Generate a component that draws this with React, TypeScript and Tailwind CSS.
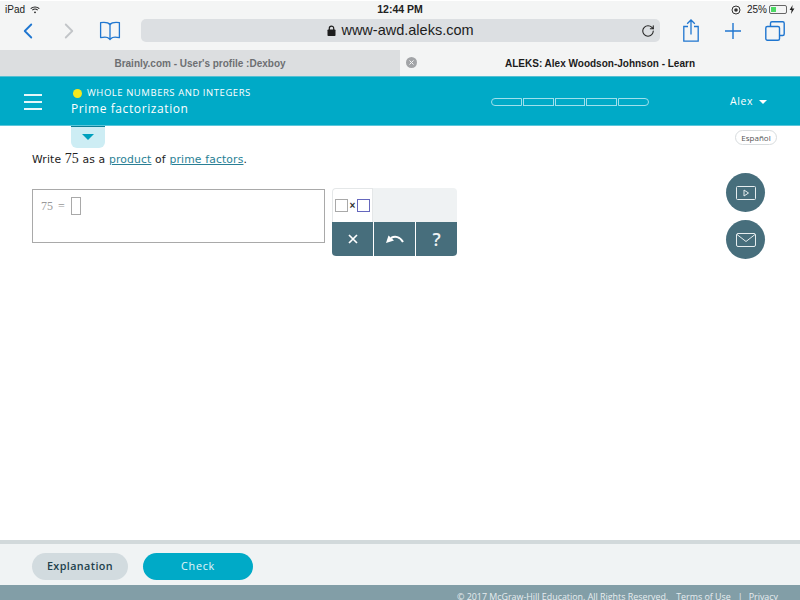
import { ChevronLeft, ChevronRight, RotateCw } from "lucide-react";

function BookIcon() {
  return (
    <svg width="22" height="20" viewBox="0 0 22 20" fill="none" stroke="#1f76d0" strokeWidth="1.3" strokeLinejoin="round">
      <path d="M11 3.5C9.5 1.6 6 1 1.6 1.6V16.6C5.5 15.8 8.8 16 10 17.5L11 18.5L12 17.5C13.2 16 16.5 15.8 20.4 16.6V1.6C16 1 12.5 1.6 11 3.5Z" />
      <path d="M11 3.5V18" />
    </svg>
  );
}

function ShareIcon() {
  return (
    <svg width="16" height="23" viewBox="0 0 16 23" fill="none" stroke="#1f76d0" strokeWidth="1.3">
      <path d="M5 7.5H0.8V22.2H15.2V7.5H11" />
      <path d="M8 15.5V1.2M4.2 4.8L8 1L11.8 4.8" />
    </svg>
  );
}

function TabsIcon() {
  return (
    <svg width="20" height="20" viewBox="0 0 20 20" fill="none" stroke="#1f76d0" strokeWidth="1.4">
      <rect x="0.8" y="5.5" width="13.7" height="13.7" rx="1.5" />
      <path d="M5.5 5.5V2.3C5.5 1.5 6.2 0.8 7 0.8H17.7C18.5 0.8 19.2 1.5 19.2 2.3V13C19.2 13.8 18.5 14.5 17.7 14.5H14.5" />
    </svg>
  );
}

function StatusBar() {
  return (
    <div className="h-[17px] shrink-0 pt-[1px] bg-[#f4f5f5] border-t border-white flex items-center justify-between pl-[5px] pr-[5px] text-[10px] text-[#222]">
      <div className="flex items-center gap-[5px] w-[200px]">
        <span>iPad</span>
        <svg width="10" height="8" viewBox="0 0 10 8" fill="none" stroke="#222" strokeWidth="1.1">
          <path d="M0.7 2.6C3 0.4 7 0.4 9.3 2.6M2.3 4.2C3.8 2.9 6.2 2.9 7.7 4.2" />
          <circle cx="5" cy="6.3" r="0.9" fill="#222" stroke="none" />
        </svg>
      </div>
      <span className="font-bold text-[10.5px] text-[#222]">12:44 PM</span>
      <div className="w-[200px] flex items-center justify-end">
        <svg width="10" height="10" viewBox="0 0 10 10" fill="none" stroke="#333" strokeWidth="1" className="mr-[6px]">
          <circle cx="5" cy="5" r="4" />
          <circle cx="5" cy="5" r="1.8" fill="#333" stroke="none" />
        </svg>
        <span className="mr-[2px]">25%</span>
        <div className="w-[18px] h-[9px] border border-[#666] rounded-[2px] p-[1px]">
          <div className="w-[5px] h-full bg-[#4cd964]" />
        </div>
        <svg width="6" height="9" viewBox="0 0 6 9" className="ml-[2px]">
          <path d="M3.6 0L0.6 5H2.6L2 9L5.4 3.6H3.2Z" fill="#222" />
        </svg>
      </div>
    </div>
  );
}

function Toolbar() {
  return (
    <div className="h-[33px] shrink-0 bg-[#f4f5f5] flex items-center pb-[6px]">
      <ChevronLeft className="ml-[15px] text-[#1f76d0]" size={26} strokeWidth={1.7} />
      <ChevronRight className="ml-[15px] text-[#c2c5c8]" size={26} strokeWidth={1.7} />
      <div className="ml-[17px]"><BookIcon /></div>
      <div className="ml-[20px] w-[519px] h-[23px] rounded-[5px] bg-[#dcdfe2] flex items-center justify-center relative">
        <svg width="9" height="11" viewBox="0 0 9 11" className="mr-[5px]">
          <rect x="0.5" y="4.5" width="8" height="6.5" rx="0.8" fill="#1d1d1d" />
          <path d="M2.3 5V3.2C2.3 0.5 6.7 0.5 6.7 3.2V5" fill="none" stroke="#1d1d1d" strokeWidth="1.2" />
        </svg>
        <span className="text-[14.5px] text-[#1d1d1d]">www-awd.aleks.com</span>
        <RotateCw size={14} strokeWidth={1.8} className="absolute right-[5px] top-[5px] text-[#222]" />
      </div>
      <div className="ml-[23px]"><ShareIcon /></div>
      <svg width="18" height="18" viewBox="0 0 18 18" stroke="#1f76d0" strokeWidth="1.4" className="ml-[25px]">
        <path d="M9 1V17M1 9H17" />
      </svg>
      <div className="ml-[23px]"><TabsIcon /></div>
    </div>
  );
}

function TabStrip() {
  return (
    <div className="h-[26px] shrink-0 flex text-[10px] font-bold items-center">
      <div className="w-[400px] h-full pt-[1px] bg-[#dcdee0] flex items-center justify-center text-[#6d6f72]">
        Brainly.com - User's profile :Dexboy
      </div>
      <div className="flex-1 h-full pt-[1px] bg-[#f3f4f4] flex items-center relative justify-center text-[#1b1b1b]">
        <div className="absolute left-[6px] top-[7px] w-[11px] h-[11px] rounded-full bg-[#a2a4a7] flex items-center justify-center">
          <svg width="5" height="5" viewBox="0 0 5 5" stroke="#f3f4f4" strokeWidth="1"><path d="M0.5 0.5L4.5 4.5M4.5 0.5L0.5 4.5" /></svg>
        </div>
        ALEKS: Alex Woodson-Johnson - Learn
      </div>
    </div>
  );
}

function Header() {
  return (
    <div className="h-[50px] shrink-0 pt-[1px] bg-[#00aac7] border-t border-[#55bfd2] border-b border-b-[#5cc6da] flex items-center text-white font-['Open_Sans',sans-serif]">
      <div className="ml-[24px] w-[18px] flex flex-col gap-[5px]">
        <div className="h-[2px] bg-white/90" />
        <div className="h-[2px] bg-white/90" />
        <div className="h-[2px] bg-white/90" />
      </div>
      <div className="ml-[29px] w-[420px]">
        <div className="flex items-center text-[9.5px] tracking-[0.55px] leading-[14px] h-[14px]">
          <span className="w-[9px] h-[9px] rounded-full bg-[#f6e91c] ml-[2px] mr-[5px]" />
          WHOLE NUMBERS AND INTEGERS
        </div>
        <div className="text-[12px] tracking-[0.6px] leading-[16px] mt-[1px]">Prime factorization</div>
      </div>
      <div className="flex gap-[1px] h-[8px]">
        <div className="w-[31px] border border-[#9fe0ec] rounded-l-full" />
        <div className="w-[31px] border border-[#9fe0ec]" />
        <div className="w-[30px] border border-[#9fe0ec]" />
        <div className="w-[31px] border border-[#9fe0ec]" />
        <div className="w-[31px] border border-[#9fe0ec] rounded-r-full" />
      </div>
      <div className="ml-[81px] flex items-center gap-[6px] text-[10.5px] tracking-[0.6px]">
        Alex
        <span className="w-0 h-0 border-l-[4px] border-r-[4px] border-t-[4px] border-l-transparent border-r-transparent border-t-white" />
      </div>
    </div>
  );
}

function Palette() {
  return (
    <div className="w-[125px] rounded-[4px] overflow-hidden flex flex-col">
      <div className="h-[34px] bg-[#eff2f3] flex">
        <div className="w-[41px] bg-white border border-b-0 border-[#e4e7e8] rounded-tl-[4px] flex items-center justify-center gap-[2px]">
          <span className="w-[13px] h-[13px] border border-[#a9a9a9]" />
          <span className="text-[10px] leading-none text-[#333] font-bold">×</span>
          <span className="w-[13px] h-[13px] border-[1.5px] border-[#6567bd]" />
        </div>
      </div>
      <div className="h-[34px] flex gap-[1px] text-white bg-white">
        <div className="flex-1 bg-[#476e7c] flex items-center justify-center">
          <svg width="10" height="10" viewBox="0 0 10 10" stroke="white" strokeWidth="1.7"><path d="M1 1L9 9M9 1L1 9" /></svg>
        </div>
        <div className="flex-1 bg-[#476e7c] flex items-center justify-center">
          <svg width="18" height="10" viewBox="0 0 18 10" fill="none">
            <path d="M0 9L2.5 1.5L8 6.5Z" fill="white" />
            <path d="M5 4C9 1.8 14 2.6 17 8" stroke="white" strokeWidth="2" />
          </svg>
        </div>
        <div className="flex-1 bg-[#476e7c] flex items-center justify-center text-[18px] font-['Open_Sans',sans-serif] font-semibold text-[#eef2f3]">?</div>
      </div>
    </div>
  );
}

function Footer() {
  return (
    <div className="mt-auto shrink-0">
      <div className="h-[4px] bg-[#d2d9db]" />
      <div className="h-[41px] bg-[#f0f3f4] flex items-center pl-[32px] pt-[4px] gap-[15px] text-[10.8px] font-semibold tracking-[0.4px] font-['Open_Sans',sans-serif]">
        <div className="w-[96px] h-[27px] rounded-full bg-[#d2dbdf] flex items-center justify-center text-[#213f4c]">Explanation</div>
        <div className="w-[110px] h-[27px] rounded-full bg-[#00aac7] flex items-center justify-center text-white/90 font-normal tracking-[0.7px]">Check</div>
      </div>
      <div className="h-[15px] bg-[#829ea7] overflow-hidden pt-[5px] pl-[457px] whitespace-nowrap flex text-[8.9px] leading-[14px] text-[#e7edef] font-['Open_Sans',sans-serif]">
        <span>© 2017 McGraw-Hill Education. All Rights Reserved.</span>
        <span className="ml-[8px]">Terms of Use</span>
        <span className="ml-[7px]">|</span>
        <span className="ml-[6px]">Privacy</span>
      </div>
    </div>
  );
}

export default function App() {
  return (
    <div className="w-[800px] h-[600px] overflow-hidden bg-white flex flex-col font-['Liberation_Sans',sans-serif]">
      <StatusBar />
      <Toolbar />
      <TabStrip />
      <Header />
      <div className="flex-1 flex relative">
        <div className="absolute left-[71px] top-0 w-[34px] h-[22px] bg-[#cdedf4] rounded-b-[6px] border-t border-[#0b7f96] flex justify-center pt-[7px]">
          <span className="w-0 h-0 border-l-[6px] border-r-[6px] border-t-[6px] border-l-transparent border-r-transparent border-t-[#00a0bd]" />
        </div>
        <div className="flex-1 pl-[32px] pt-[25px]">
          <div className="text-[10.8px] leading-[16px] tracking-[0.15px] text-[#222] font-['DejaVu_Sans',sans-serif]">
            Write <span className="font-['Liberation_Serif',serif] text-[14px] tracking-normal">75</span> as a{" "}
            <span className="text-[#2a7f95] underline">product</span> of{" "}
            <span className="text-[#2a7f95] underline">prime factors</span>.
          </div>
          <div className="mt-[20px] flex items-start">
            <div className="mt-[1px] w-[293px] h-[54px] border border-[#a9a9a9] flex items-start pl-[8px] pt-[7px] text-[12px] text-[#999] font-['Liberation_Serif',serif]">
              <span className="leading-[18px]">75</span>
              <span className="ml-[5px] leading-[18px]">=</span>
              <span className="ml-[6px] w-[10px] h-[18px] border border-[#a9a9a9]" />
            </div>
            <div className="ml-[7px]"><Palette /></div>
          </div>
        </div>
        <div className="w-[74px] shrink-0 flex flex-col items-start pt-[4px]">
          <div className="ml-[9px] w-[42px] h-[15px] rounded-full border border-[#d8dcde] flex items-center justify-center text-[8px] text-[#555] font-['Open_Sans',sans-serif]">Español</div>
          <div className="mt-[28px] w-[39px] h-[39px] rounded-full bg-[#476e7c] flex items-center justify-center">
            <svg width="20" height="14" viewBox="0 0 20 14" fill="none" stroke="#e6edef" strokeWidth="1">
              <rect x="0.5" y="0.5" width="19" height="13" rx="1" />
              <path d="M8 4V10L12.5 7Z" />
            </svg>
          </div>
          <div className="mt-[8px] w-[39px] h-[39px] rounded-full bg-[#476e7c] flex items-center justify-center">
            <svg width="20" height="14" viewBox="0 0 20 14" fill="none" stroke="#e6edef" strokeWidth="1">
              <rect x="0.5" y="0.5" width="19" height="13" rx="1.5" />
              <path d="M1 1.5L10 8.5L19 1.5" />
            </svg>
          </div>
        </div>
      </div>
      <Footer />
    </div>
  );
}
